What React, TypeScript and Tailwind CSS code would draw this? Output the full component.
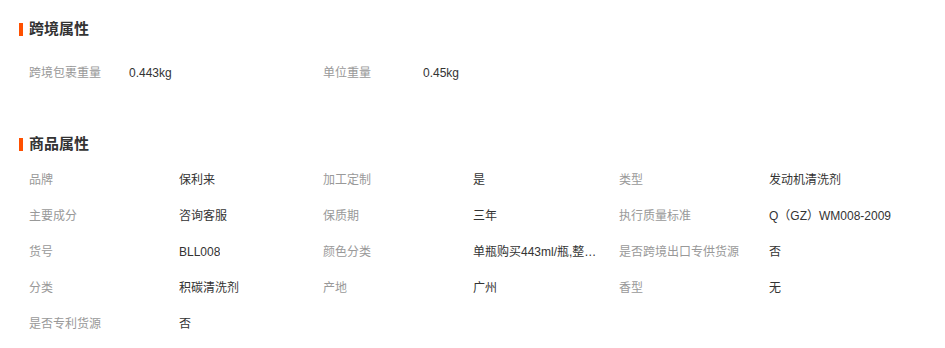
import React from "react";

interface Attr {
  label: string;
  value: string;
}

const crossBorder: Attr[] = [
  { label: "跨境包裹重量", value: "0.443kg" },
  { label: "单位重量", value: "0.45kg" },
];

const productAttrs: Attr[] = [
  { label: "品牌", value: "保利来" },
  { label: "加工定制", value: "是" },
  { label: "类型", value: "发动机清洗剂" },
  { label: "主要成分", value: "咨询客服" },
  { label: "保质期", value: "三年" },
  { label: "执行质量标准", value: "Q（GZ）WM008-2009" },
  { label: "货号", value: "BLL008" },
  { label: "颜色分类", value: "单瓶购买443ml/瓶,整箱购买443ml*24瓶" },
  { label: "是否跨境出口专供货源", value: "否" },
  { label: "分类", value: "积碳清洗剂" },
  { label: "产地", value: "广州" },
  { label: "香型", value: "无" },
  { label: "是否专利货源", value: "否" },
];

const SectionTitle: React.FC<{ text: string }> = ({ text }) => (
  <div className="flex items-center h-[20px] pl-[19px]">
    <span className="w-[4px] h-[13px] bg-[#ff5000] mr-[6px]" />
    <span className="text-[15px] font-bold leading-[20px] text-[#333]">{text}</span>
  </div>
);

export default function App() {
  return (
    <div
      className="w-[945px] h-[348px] bg-white pt-[19px] text-[12px]"
      style={{ fontFamily: '"Liberation Sans", "Noto Sans CJK SC", sans-serif' }}
    >
      <SectionTitle text="跨境属性" />
      <div className="mt-[16px] pl-[29px] flex">
        {crossBorder.map((a) => (
          <div key={a.label} className="w-[294px] h-9 flex items-center">
            <span className="w-[100px] text-[#999]">{a.label}</span>
            <span className="text-[#333]">{a.value}</span>
          </div>
        ))}
      </div>

      <div className="mt-[43px]">
        <SectionTitle text="商品属性" />
      </div>
      <div className="mt-[8px] pl-[29px] grid grid-cols-[294px_296px_295px]">
        {productAttrs.map((a) => (
          <div key={a.label} className="h-9 flex items-center min-w-0">
            <span className="w-[150px] shrink-0 text-[#999]">{a.label}</span>
            <span className="max-w-[126px] truncate text-[#333]">{a.value}</span>
          </div>
        ))}
      </div>
    </div>
  );
}
